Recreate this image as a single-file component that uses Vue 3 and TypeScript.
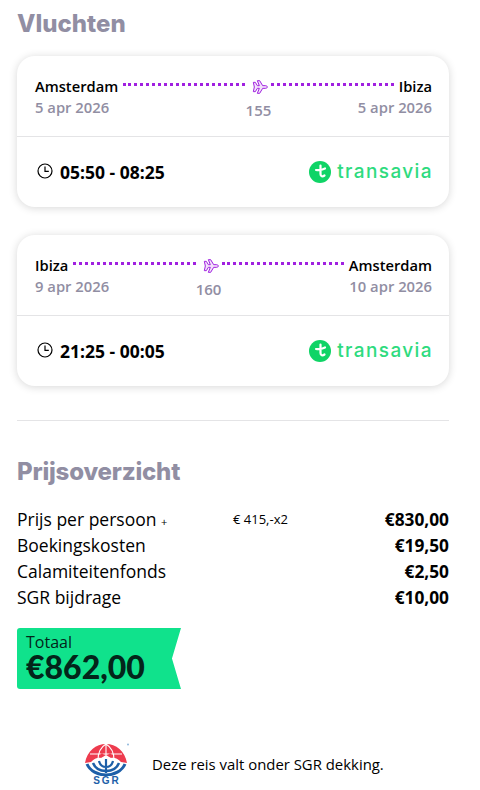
<script setup lang="ts">
interface Flight {
  from: string; to: string; dateFrom: string; dateTo: string; duration: number; time: string
}
const flights: Flight[] = [
  { from: 'Amsterdam', to: 'Ibiza', dateFrom: '5 apr 2026', dateTo: '5 apr 2026', duration: 155, time: '05:50 - 08:25' },
  { from: 'Ibiza', to: 'Amsterdam', dateFrom: '9 apr 2026', dateTo: '10 apr 2026', duration: 160, time: '21:25 - 00:05' },
]
const costs = [
  { label: 'Boekingskosten', value: '€19,50' },
  { label: 'Calamiteitenfonds', value: '€2,50' },
  { label: 'SGR bijdrage', value: '€10,00' },
]
</script>

<template>
  <main class="page">
    <h2 class="heading first">Vluchten</h2>
    <section v-for="f in flights" :key="f.from" class="card">
      <div class="route">
        <div class="end">
          <div class="city">{{ f.from }}</div>
          <div class="date"><span>{{ f.dateFrom }}</span></div>
        </div>
        <div class="middle">
          <div class="line">
            <span class="dots"></span>
            <svg class="plane" viewBox="0 0 24 24" width="16" height="16">
              <path d="M2 5 L5 5 L8 10 L11 10 L8 2.500 L11.500 2.500 L16 10 L20 10 C22 10 23 11 23 12 C23 13 22 14 20 14 L16 14 L11.500 21.500 L8 21.500 L11 14 L8 14 L5 19 L2 19 L3.500 12 Z" fill="#f3e3fa" stroke="#a020e0" stroke-width="1.500" stroke-linejoin="round"/>
            </svg>
            <span class="dots"></span>
          </div>
          <div class="duration">{{ f.duration }}</div>
        </div>
        <div class="end right">
          <div class="city">{{ f.to }}</div>
          <div class="date"><span>{{ f.dateTo }}</span></div>
        </div>
      </div>
      <div class="info">
        <div class="time">
          <svg class="clock" viewBox="0 0 16 16" width="16" height="16">
            <circle cx="8" cy="8" r="7" fill="none" stroke="#000" stroke-width="1.200"/>
            <path d="M8 3.500 V8.300 H11.800" fill="none" stroke="#000" stroke-width="1.200"/>
          </svg>
          <span>{{ f.time }}</span>
        </div>
        <div class="logo">
          <svg viewBox="0 0 22 22" width="22" height="22">
            <circle cx="11" cy="11" r="11" fill="#0fd466"/>
            <path d="M11.500 4.500 V13 C11.500 15.500 13.500 16 15.500 14.500 M7 9 C10 9.500 13 9 16 7.500" fill="none" stroke="#fff" stroke-width="2.200" stroke-linecap="round"/>
          </svg>
          <span class="brand">transavia</span>
        </div>
      </div>
    </section>

    <hr class="rule" />

    <h2 class="heading">Prijsoverzicht</h2>
    <div class="prices">
      <div class="row">
        <span class="label">Prijs per persoon <small class="plus">+</small></span>
        <span class="mult">€ 415,-x2</span>
        <strong>€830,00</strong>
      </div>
      <div v-for="c in costs" :key="c.label" class="row">
        <span class="label">{{ c.label }}</span>
        <strong>{{ c.value }}</strong>
      </div>
    </div>

    <div class="total">
      <div class="total-label">Totaal</div>
      <div class="total-value">€862,00</div>
    </div>

    <footer class="sgr">
      <div class="sgr-logo">
        <svg viewBox="0 0 46 33" width="46" height="33">
          <path d="M1 20 C3 8 12 1 22 1 C32 1 41 8 43 20 L37 19 C34 15 29 14 27 15 L22 12 L17 15 C15 14 10 15 7 19 Z" fill="#ee3b4e"/>
          <path d="M22 1 V12 M14 17 C14 10 17 4 22 1 C27 4 30 10 30 17 M6 11 H38" fill="none" stroke="#fff" stroke-width="1.100"/>
          <circle cx="18" cy="12" r="1.700" fill="#ee3b4e"/>
          <circle cx="26" cy="12" r="1.700" fill="#ee3b4e"/>
          <path d="M3 21 C6 28 14 32 22 32 C30 32 38 28 41 21" fill="none" stroke="#1d5fa8" stroke-width="3"/>
          <path d="M9 20 C11 25 16 28 22 28 C28 28 33 25 35 20" fill="none" stroke="#1d5fa8" stroke-width="2.500"/>
          <path d="M15 18 C16 22 19 24 22 24 C25 24 28 22 29 18 M22 16 V30" fill="none" stroke="#1d5fa8" stroke-width="2.200"/>
          <circle cx="44" cy="1.500" r="1" fill="#8fb8dc"/>
        </svg>
        <span class="sgr-text">SGR</span>
      </div>
      <span class="sgr-note">Deze reis valt onder SGR dekking.</span>
    </footer>
  </main>
</template>

<style scoped>
.page {
  width: 480px;
  height: 790px;
  box-sizing: border-box;
  padding: 0 31px 0 17px;
  overflow: hidden;
  background: #fff;
  font-family: "Open Sans", "Noto Sans", sans-serif;
  color: #000;
}
.heading {
  margin: 0;
  font-family: Inter, Lato, sans-serif;
  font-weight: 800;
  font-size: 24px;
  line-height: 30px;
  color: #918ea3;
}
.heading.first { padding-top: 9px; margin-bottom: 17px; }
.card {
  height: 151px;
  margin-bottom: 28px;
  border-radius: 18px;
  background: #fff;
  box-shadow: 0 1px 9px rgba(0, 0, 0, 0.16);
  display: flex;
  flex-direction: column;
}
.route {
  height: 81px;
  box-sizing: border-box;
  padding: 20px 17px 0 18px;
  display: flex;
  border-bottom: 1px solid #e4e4e6;
}
.end { white-space: nowrap; flex: none; }
.city { font-size: 14.700px; line-height: 20px; font-weight: 600; }
.date {
  width: 0;
  min-width: 100%;
  display: flex;
  font-size: 14.800px;
  line-height: 20px;
  margin-top: 1px;
  font-weight: 600;
  color: #918ea3;
}
.right .date { justify-content: flex-end; }
.date span { flex: none; }
.right .city { text-align: right; }
.middle {
  flex: 1;
  min-width: 0;
  display: flex;
  flex-direction: column;
  align-items: center;
}
.line {
  width: 100%;
  height: 20px;
  display: flex;
  align-items: center;
  padding: 0 5px;
  box-sizing: border-box;
  margin-top: -2px;
}
.dots { flex: 1; height: 0; border-top: 3px dotted #a020e0; }
.plane { flex: none; margin: 6px 3px 0 7px; }
.duration {
  font-size: 15px;
  line-height: 20px;
  margin-top: 6px;
  font-weight: 600;
  color: #918ea3;
}
.info {
  flex: 1;
  display: flex;
  align-items: center;
  justify-content: space-between;
  padding: 0 17px 0 20px;
}
.time {
  display: flex;
  align-items: center;
  gap: 7px;
  font-size: 17.500px;
  font-weight: 700;
}
.clock { margin-top: -3px; }
.logo { display: flex; align-items: center; gap: 6px; }
.brand {
  font-family: Inter, Lato, sans-serif;
  font-size: 19px;
  font-weight: 500;
  letter-spacing: 1.400px;
  margin-right: -1px;
  line-height: 22px;
  color: #2edb7e;
}
.rule {
  margin: 34px 0 0;
  border: 0;
  border-top: 1px solid #e4e4e6;
}
.heading:not(.first) { margin-top: 36px; letter-spacing: -0.200px; }
.prices { margin-top: 19px; }
.row {
  display: grid;
  grid-template-columns: 216px 1fr auto;
  align-items: center;
  height: 26px;
  font-size: 17.500px;
}
.row strong { grid-column: 3; font-size: 17.300px; font-weight: 700; }
.plus { font-size: 11px; }
.mult { font-size: 13px; }
.total {
  width: 164px;
  height: 61px;
  margin-top: 18px;
  box-sizing: border-box;
  padding: 4px 0 0 9px;
  background: #10e28c;
  border-radius: 3px 0 0 3px;
  clip-path: polygon(0 0, 100% 0, 94.500% 50%, 100% 100%, 0 100%);
  color: #03251a;
}
.total-label { font-size: 16px; line-height: 20px; }
.total-value {
  font-family: Lato, sans-serif;
  font-weight: 900;
  font-size: 32px;
  line-height: 30px;
}
.sgr {
  margin-top: 54px;
  padding-left: 67px;
  display: flex;
  align-items: center;
  gap: 22px;
}
.sgr-logo { width: 46px; display: flex; flex-direction: column; align-items: center; }
.sgr-text {
  font-family: "Liberation Sans", sans-serif;
  font-weight: 700;
  font-size: 10px;
  line-height: 10px;
  letter-spacing: 2px;
  color: #1d5fa8;
}
.sgr-note { font-size: 14.900px; margin-top: -2px; }
</style>
